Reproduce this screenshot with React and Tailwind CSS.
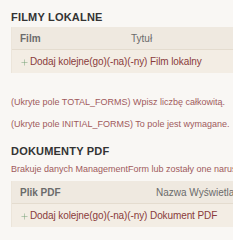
import { Plus } from "lucide-react";

function InlineTable({ cols, addLabel }) {
  return (
    <div className="w-[260px] border-l border-[#ece5da]">
      {/* header row */}
      <div className="flex h-[23px] items-center bg-[#efe9e0] border-b border-[#e4dccf] text-[10px] text-[#6b6b6b]">
        <div className="pl-[8px] font-bold" style={{ width: cols[0].w }}>
          {cols[0].label}
        </div>
        <div className="whitespace-nowrap">{cols[1].label}</div>
      </div>
      {/* add row */}
      <div className="flex h-[23px] items-center bg-[#f3ede4] pl-[8px] text-[10px] tracking-[-0.1px] text-[#8a3b3b] whitespace-nowrap">
        <Plus className="w-[9px] h-[9px] text-[#6f9e72] mr-[1px] mt-[2px]" strokeWidth={1.3} />
        {addLabel}
      </div>
    </div>
  );
}

export default function App() {
  return (
    <div
      className="w-[233px] h-[240px] overflow-hidden bg-[#f9f7f4] pl-[11px]"
      style={{ fontFamily: '"Liberation Sans", Arial, sans-serif' }}
    >
      <h2 className="pt-[9px] h-[27px] text-[11px] font-bold tracking-[0.2px] text-[#333]">
        FILMY LOKALNE
      </h2>
      <InlineTable
        cols={[
          { label: "Film", w: "119px" },
          { label: "Tytuł" },
        ]}
        addLabel="Dodaj kolejne(go)(-na)(-ny) Film lokalny"
      />

      <div className="mt-[23px] flex flex-col gap-[10px] text-[9px] leading-[12px] text-[#a05a5c] whitespace-nowrap">
        <p>(Ukryte pole TOTAL_FORMS) Wpisz liczbę całkowitą.</p>
        <p>(Ukryte pole INITIAL_FORMS) To pole jest wymagane.</p>
      </div>

      <h2 className="mt-[14px] text-[11px] leading-[14px] font-bold tracking-[0.2px] text-[#333]">
        DOKUMENTY PDF
      </h2>
      <p className="mt-[5px] mb-[6px] text-[9px] leading-[12px] text-[#a05a5c] whitespace-nowrap">
        Brakuje danych ManagementForm lub zostały one naruszone.
      </p>
      <InlineTable
        cols={[
          { label: "Plik PDF", w: "144px" },
          { label: "Nazwa Wyświetlana" },
        ]}
        addLabel="Dodaj kolejne(go)(-na)(-ny) Dokument PDF"
      />
    </div>
  );
}
